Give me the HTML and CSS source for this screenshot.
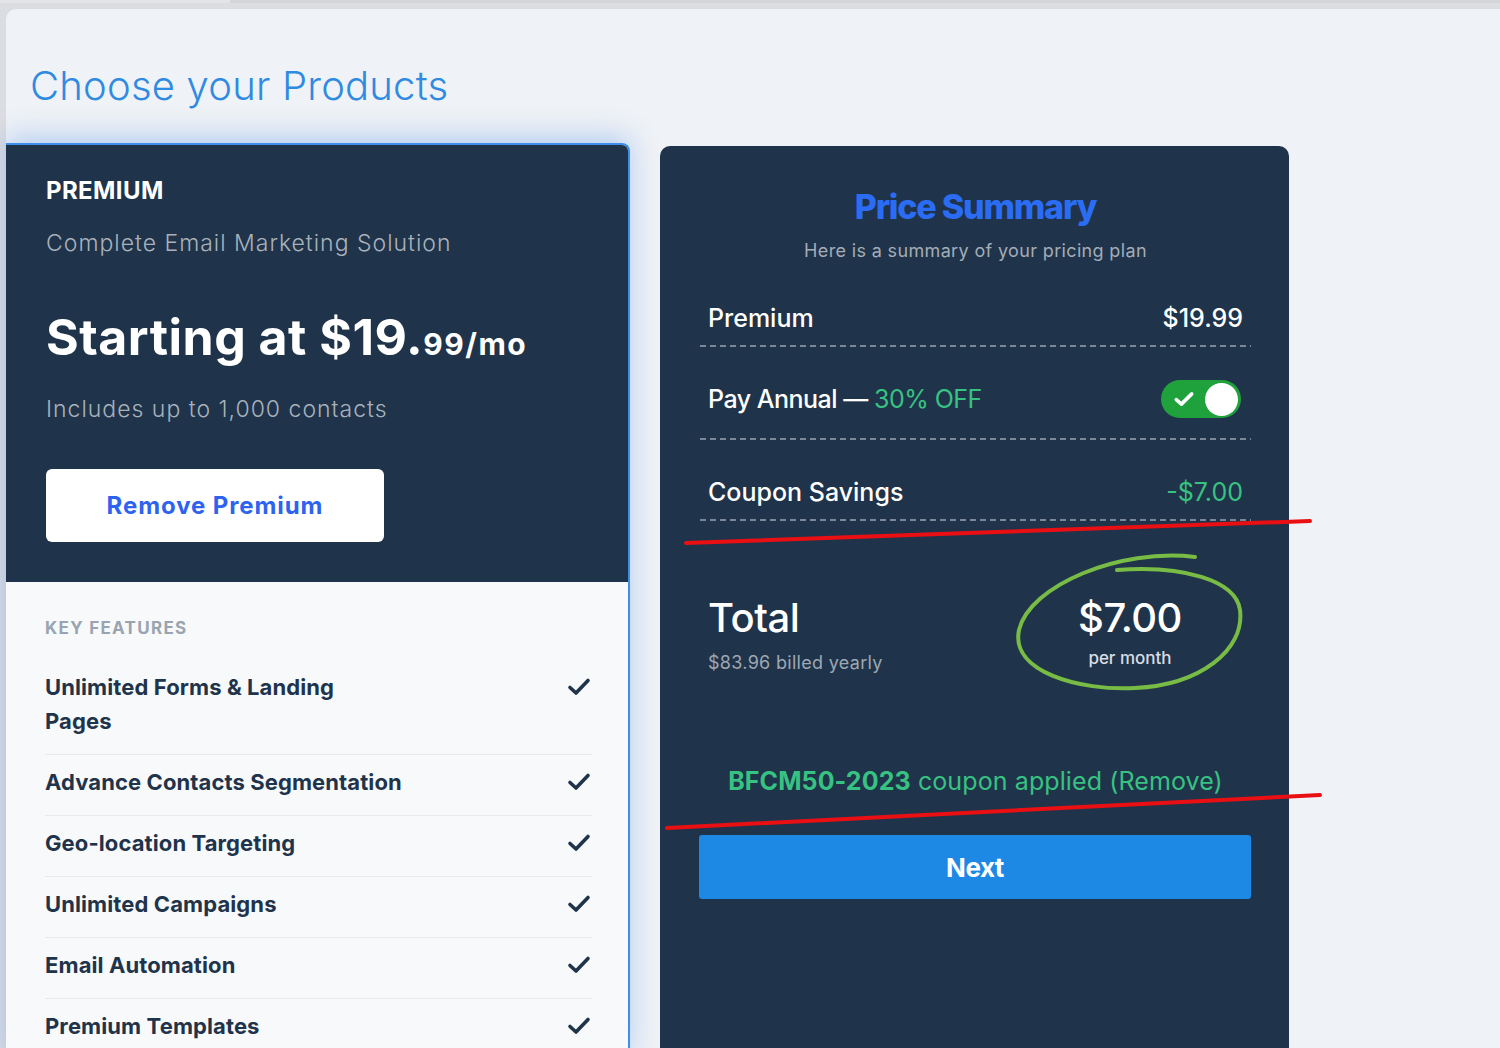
FILE: index.html
```html
<!DOCTYPE html>
<html lang="en">
<head>
<meta charset="utf-8">
<title>Choose your Products</title>
<link rel="stylesheet" href="styles.css">
</head>
<body>
<div class="topstrip"><span class="topstrip-left"></span><span class="topstrip-right"></span></div>
<main class="page">
  <h1 class="page-title">Choose your Products</h1>
  <div class="columns">
    <section class="plan-card">
      <div class="plan-head">
        <div class="plan-name">PREMIUM</div>
        <div class="plan-desc">Complete Email Marketing Solution</div>
        <div class="plan-price">Starting at $19.<span class="plan-price-small">99/mo</span></div>
        <div class="plan-desc plan-contacts">Includes up to 1,000 contacts</div>
        <button class="btn-remove">Remove Premium</button>
      </div>
      <div class="plan-features">
        <div class="features-title">KEY FEATURES</div>
        <ul class="feature-list">
          <li class="feature"><span class="feature-text">Unlimited Forms &amp; Landing<br>Pages</span><svg class="check" viewBox="0 0 24 20"><path d="M3 10.5 L9 16 L21 3.5"/></svg></li>
          <li class="feature"><span class="feature-text">Advance Contacts Segmentation</span><svg class="check" viewBox="0 0 24 20"><path d="M3 10.5 L9 16 L21 3.5"/></svg></li>
          <li class="feature"><span class="feature-text">Geo-location Targeting</span><svg class="check" viewBox="0 0 24 20"><path d="M3 10.5 L9 16 L21 3.5"/></svg></li>
          <li class="feature"><span class="feature-text">Unlimited Campaigns</span><svg class="check" viewBox="0 0 24 20"><path d="M3 10.5 L9 16 L21 3.5"/></svg></li>
          <li class="feature"><span class="feature-text">Email Automation</span><svg class="check" viewBox="0 0 24 20"><path d="M3 10.5 L9 16 L21 3.5"/></svg></li>
          <li class="feature"><span class="feature-text">Premium Templates</span><svg class="check" viewBox="0 0 24 20"><path d="M3 10.5 L9 16 L21 3.5"/></svg></li>
        </ul>
      </div>
    </section>

    <section class="summary-card">
      <h2 class="summary-title">Price Summary</h2>
      <p class="summary-sub">Here is a summary of your pricing plan</p>
      <div class="sum-row">
        <span>Premium</span><span>$19.99</span>
      </div>
      <div class="sum-row sum-row-toggle">
        <span>Pay Annual — <span class="green">30% OFF</span></span>
        <span class="toggle"><svg class="toggle-check" viewBox="0 0 16 14"><path d="M2 7.5 L6 11 L14 3"/></svg><span class="knob"></span></span>
      </div>
      <div class="sum-row">
        <span>Coupon Savings</span><span class="green">-$7.00</span>
      </div>
      <div class="total">
        <div class="total-left">
          <div class="total-label">Total</div>
          <div class="total-sub">$83.96 billed yearly</div>
        </div>
        <div class="total-right">
          <div class="total-amount">$7.00</div>
          <div class="total-per">per month</div>
        </div>
      </div>
      <p class="coupon"><b>BFCM50-2023</b> coupon applied (Remove)</p>
      <button class="btn-next">Next</button>
    </section>
  </div>
</main>
<svg class="annotations" viewBox="0 0 1500 1048" width="1500" height="1048">
  <path class="red" d="M686 543 L1310 521"/>
  <path class="red" d="M667 828 L1320 795"/>
  <path class="circle" d="M1195 557 C1120 548 1030 585 1019 630 C1010 672 1080 691 1135 688 C1200 685 1245 650 1240 610 C1236 580 1182 565 1117 570"/>
</svg>
</body>
</html>
```

FILE: styles.css
```css
* { box-sizing: border-box; }

html, body {
  margin: 0;
  padding: 0;
}

body {
  position: relative;
  width: 1500px;
  height: 1048px;
  overflow: hidden;
  background: #dcdde1;
  font-family: "Inter", "Roboto", "Liberation Sans", sans-serif;
}

.topstrip {
  display: flex;
  height: 9px;
}
.topstrip-left {
  width: 230px;
  height: 3px;
  background: #e3e4e7;
}
.topstrip-right {
  flex: 1;
  height: 3px;
  background: #d5d6da;
}

.page {
  margin-left: 6px;
  height: 1039px;
  background: #eff2f6;
  border-radius: 10px 0 0 0;
  padding-top: 51px;
}

.page-title {
  margin: 0 0 31px 24px;
  font-size: 40px;
  line-height: 52px;
  font-weight: 300;
  color: #2f8ae2;
  letter-spacing: 0.2px;
}

.columns {
  display: flex;
  align-items: flex-start;
  gap: 30px;
}

/* ---------- Plan card ---------- */
.plan-card {
  width: 624px;
  border: 2px solid #3d8fea;
  border-left: none;
  border-bottom: none;
  border-radius: 0 8px 0 0;
  box-shadow: 0 -6px 28px rgba(70, 135, 235, 0.35);
  overflow: hidden;
  height: 920px;
  background: #f7f9fb;
}

.plan-head {
  background: #1f344b;
  padding: 33px 40px 40px 40px;
}

.plan-name {
  color: #ffffff;
  font-size: 24px;
  line-height: 26px;
  font-weight: 700;
  letter-spacing: 0.4px;
}

.plan-desc {
  margin-top: 24px;
  color: #a9b1ba;
  font-size: 23px;
  line-height: 30px;
  font-weight: 300;
  letter-spacing: 1px;
}

.plan-price {
  margin-top: 49px;
  color: #ffffff;
  font-size: 50px;
  line-height: 60px;
  font-weight: 700;
  letter-spacing: 0.5px;
}
.plan-price-small {
  font-size: 30px;
  letter-spacing: 1.5px;
}

.plan-contacts {
  margin-top: 20px;
}

.btn-remove {
  display: block;
  margin-top: 45px;
  width: 338px;
  height: 73px;
  border: none;
  border-radius: 6px;
  background: #ffffff;
  color: #2e63f0;
  font-family: inherit;
  font-size: 24px;
  font-weight: 700;
  letter-spacing: 0.9px;
}

.plan-features {
  padding: 36px 36px 0 39px;
}

.features-title {
  color: #9aa4b0;
  font-size: 17px;
  line-height: 20px;
  font-weight: 700;
  letter-spacing: 1.3px;
}

.feature-list {
  list-style: none;
  margin: 22px 0 0 0;
  padding: 0;
}

.feature {
  display: flex;
  justify-content: space-between;
  align-items: flex-start;
  padding: 10px 0 16px 0;
  border-bottom: 1px solid #e6e9ee;
}
.feature:last-child { border-bottom: none; }

.feature-text {
  color: #1f344b;
  font-size: 22px;
  line-height: 34px;
  font-weight: 700;
  letter-spacing: 0.1px;
}

.check {
  width: 24px;
  height: 20px;
  margin-top: 7px;
  margin-right: 1px;
  fill: none;
  stroke: #1f344b;
  stroke-width: 3.6;
  stroke-linecap: round;
  stroke-linejoin: round;
}

/* ---------- Summary card ---------- */
.summary-card {
  width: 629px;
  height: 920px;
  margin-top: 3px;
  background: #1f344b;
  border-radius: 10px 10px 0 0;
  padding: 41px 38px 0 40px;
  color: #ffffff;
}

.summary-title {
  margin: 0;
  text-align: center;
  color: #2b6cf4;
  font-size: 34px;
  line-height: 40px;
  font-weight: 800;
  letter-spacing: -1.2px;
}

.summary-sub {
  margin: 12px 0 3px 0;
  text-align: center;
  color: #a4acb6;
  font-size: 18px;
  line-height: 24px;
  font-weight: 400;
  letter-spacing: 0.35px;
}

.sum-row {
  position: relative;
  display: flex;
  justify-content: space-between;
  align-items: center;
  padding: 40px 8px 17px 8px;
  font-size: 25px;
  line-height: 24px;
  font-weight: 500;
  letter-spacing: 0;
}
.sum-row::after {
  content: "";
  position: absolute;
  left: 0;
  right: 0;
  bottom: 0;
  height: 2px;
  background: repeating-linear-gradient(90deg, #7a8797 0 6px, transparent 6px 10px);
}
.sum-row-toggle {
  padding: 33px 10px 22px 8px;
  letter-spacing: -0.5px;
}
.sum-row:last-of-type {
  padding-bottom: 16px;
}

.green { color: #38c281; font-weight: 400; }

.toggle {
  display: flex;
  align-items: center;
  justify-content: space-between;
  width: 80px;
  height: 38px;
  padding: 0 3px 0 12px;
  border-radius: 19px;
  background: #1fa23b;
}
.toggle-check {
  width: 22px;
  height: 18px;
  fill: none;
  stroke: #ffffff;
  stroke-width: 2.8;
  stroke-linecap: round;
  stroke-linejoin: round;
}
.knob {
  width: 33px;
  height: 33px;
  border-radius: 50%;
  background: #ffffff;
}

.total {
  display: flex;
  justify-content: space-between;
  align-items: flex-start;
  padding: 73px 41px 0 8px;
}
.total-label {
  font-size: 40px;
  line-height: 48px;
  font-weight: 500;
  letter-spacing: -0.5px;
}
.total-sub {
  margin-top: 9px;
  color: #9ea7b2;
  font-size: 18px;
  line-height: 24px;
  font-weight: 400;
  letter-spacing: 0.3px;
}
.total-right {
  width: 160px;
  text-align: center;
}
.total-amount {
  font-size: 40px;
  line-height: 48px;
  font-weight: 500;
  letter-spacing: -0.5px;
}
.total-per {
  margin-top: 6px;
  color: #d8dde3;
  font-size: 17px;
  line-height: 20px;
  font-weight: 500;
  letter-spacing: 0;
}

.coupon {
  margin: 91px 0 0 0;
  text-align: center;
  color: #38c281;
  font-size: 25px;
  line-height: 30px;
  font-weight: 400;
  letter-spacing: 0.1px;
}
.coupon b { font-weight: 700; }

.btn-next {
  display: block;
  margin: 39px 0 0 -1px;
  width: 552px;
  height: 64px;
  border: none;
  border-radius: 3px;
  background: #1e88e5;
  color: #ffffff;
  font-family: inherit;
  font-size: 26px;
  font-weight: 700;
  letter-spacing: -0.5px;
}

/* ---------- Annotation overlay ---------- */
.annotations {
  position: absolute;
  left: 0;
  top: 0;
  pointer-events: none;
}
.annotations .red {
  fill: none;
  stroke: #ea0f12;
  stroke-width: 4;
  stroke-linecap: round;
}
.annotations .circle {
  fill: none;
  stroke: #79bc45;
  stroke-width: 4;
  stroke-linecap: round;
}
```
